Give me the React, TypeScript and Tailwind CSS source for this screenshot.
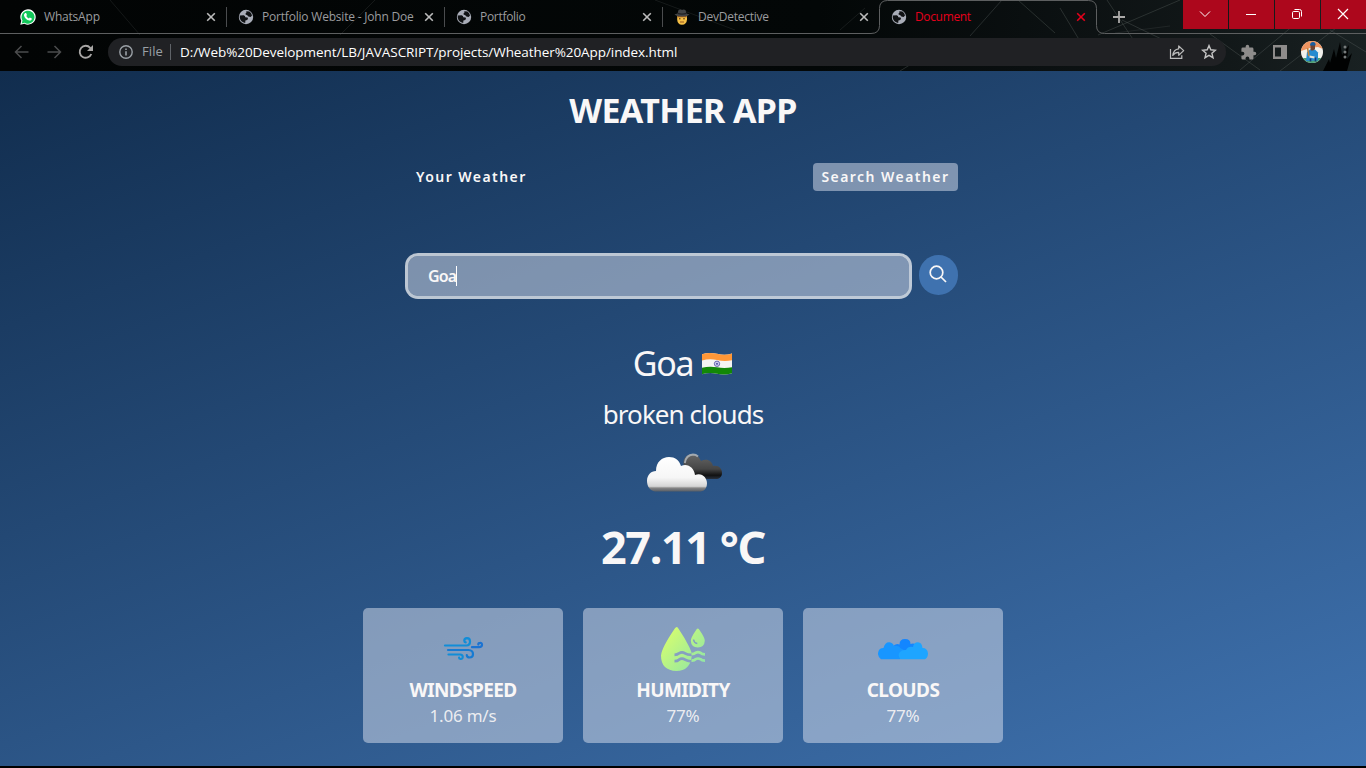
import React from "react";

type IconProps = { className?: string };

const Globe = ({ className = "" }: IconProps) => (
  <svg viewBox="0 0 16 16" className={`size-4 shrink-0 ${className}`}>
    <circle cx="8" cy="8" r="7.2" fill="#a9adb8" />
    <path
      d="M1.8 6.6 L5.6 6.3 Q7.4 6.6 7.3 8.2 L9.6 8.6 Q10.6 10 9.2 11 L7.4 11.6 L7.2 14 Q2.6 13.2 1.7 8.6Z M8.3 2.3 L11.4 2.6 Q13.6 4.1 14 6.6 L12.6 8 L10.4 7.5 Q9.6 6.2 7.6 5.6 Q7 4.4 8.4 3.8Z"
      fill="#101214"
    />
  </svg>
);

const WhatsApp = () => (
  <svg viewBox="0 0 16 16" className="size-4 shrink-0">
    <path d="M.3 15.8 1.3 11.8A7.7 7.7 0 1 1 4.4 14.8Z" fill="#fff" />
    <path d="M1.7 14.4 2.5 11.6A6.5 6.5 0 1 1 4.6 13.7Z" fill="#12c75a" />
    <path
      d="M5.2 4.1h.9l.9 2-.7 1c.6 1.2 1.4 1.9 2.6 2.4l.9-1 2 1v.8c-.4 1-1.4 1.5-2.3 1.3-2.9-.7-5-2.8-5.5-5.2-.1-.9.5-1.8 1.2-2.3Z"
      fill="#fff"
    />
  </svg>
);

const Detective = () => (
  <svg viewBox="0 0 16 16" className="size-4 shrink-0">
    <path d="M3.2 7h9.8v3.5Q12.6 15.6 8 15.8 3.4 15.6 3.2 10.5Z" fill="#f5bf45" />
    <path d="M3.4 6.5h9.2v1.8H3.4Z" fill="#9b5b1e" />
    <circle cx="5.8" cy="9.7" r=".8" fill="#54301a" />
    <circle cx="10" cy="9.7" r=".8" fill="#54301a" />
    <path d="M6 13h4" stroke="#8a4a1c" strokeWidth=".9" />
    <path d="M.4 5.4 3.6 4.6 4.4 1.2Q6.200-.2 8 .9 9.800-.2 11.600 1.200L12.400 4.600 15.600 5.400Q13 7.600 8 7.600T.4 5.400Z" fill="#424447" />
    <path d="M3.700 4.300Q8 5.800 12.300 4.300" stroke="#202124" strokeWidth="1.300" fill="none" />
  </svg>
);

const Cross = ({ className = "" }: IconProps) => (
  <svg viewBox="0 0 10 10" className={`size-[10px] shrink-0 ${className}`}>
    <path d="M1.200 1.200 8.800 8.800M8.800 1.200 1.200 8.800" stroke="currentColor" strokeWidth="1.600" />
  </svg>
);

function Tab({ title, icon, tracking }: { title: string; icon: React.ReactNode; tracking: string }) {
  return (
    <div className="flex h-[34px] w-[207px] shrink-0 items-center text-[#9b9c9f]">
      {icon}
      <span className={`ml-2 flex-1 whitespace-nowrap text-[12px] ${tracking}`}>{title}</span>
      <Cross className="mr-[10px] text-[#bcbcbc]" />
      <span className="h-5 w-px bg-[#4a4c4e]" />
    </div>
  );
}

function WindowButton({ children }: { children: React.ReactNode }) {
  return (
    <div className="flex h-[29px] flex-1 items-center justify-center bg-[#ad071c] text-white">
      <svg viewBox="0 0 12 12" className="mr-px mb-px size-3" fill="none" stroke="currentColor" strokeWidth="1">
        {children}
      </svg>
    </div>
  );
}

const Scratches = () => (
  <svg viewBox="0 0 1366 71" className="absolute inset-0 h-[71px] w-[1366px]" fill="none">
    <defs>
      <linearGradient id="steel">
        <stop offset="0" stopColor="#020404" />
        <stop offset=".6" stopColor="#030707" />
        <stop offset=".75" stopColor="#0a0f10" />
        <stop offset=".9" stopColor="#121819" />
        <stop offset="1" stopColor="#192122" />
      </linearGradient>
    </defs>
    <rect width="1366" height="71" fill="url(#steel)" />
    <g stroke="#59605f" strokeOpacity=".38">
      <path d="M1098 35 1180 0M1107 0 1150 65M1122 20 1180 48M1060 8 1095 66M1018 0 1055 33M1240 70 1300 20M1280 71 1340 25M1330 30 1366 52M1210 34 1260 70M970 36 1002 0M900 71 950 40" />
      <path d="M655 0 735 30M840 30 865 8M340 35 375 0M110 0 140 35M1115 33 1170 26" strokeOpacity=".22" />
    </g>
    <path d="m1323 71 6-12 1 4 4-14 2 9 4-16 2 13 7-10-2 14 5-6-5 18Z" fill="#010202" />
  </svg>
);

function TabStrip() {
  return (
    <div className="relative flex h-[34px]">
      <svg viewBox="0 0 1366 35" className="absolute left-0 top-0 h-[35px] w-[1366px]" fill="none">
        <path
          d="M0 33.500H871Q879.500 33.500 879.500 25.500V8.500Q879.500.5 887.500.5H1088.500Q1096.500.5 1096.500 8.500V25.500Q1096.500 33.500 1104.500 33.500H1366"
          stroke="#5d5f60"
        />
      </svg>
      <div className="relative flex pl-5">
        <Tab title="WhatsApp" icon={<WhatsApp />} tracking="tracking-[-0.2px]" />
        <div className="w-[11px]" />
        <Tab title="Portfolio Website - John Doe" icon={<Globe />} tracking="tracking-[-0.2px]" />
        <div className="w-[11px]" />
        <Tab title="Portfolio" icon={<Globe />} tracking="tracking-[-0.3px]" />
        <div className="w-[11px]" />
        <div className="flex h-[34px] w-[217px] items-center text-[#9b9c9f]">
          <Detective />
          <span className="ml-2 w-[161px] text-[12px] tracking-[-0.25px]">DevDetective</span>
          <Cross className="text-[#bcbcbc]" />
        </div>
        <div className="flex h-[34px] w-[222px] items-center text-[#e5001b]">
          <Globe />
          <span className="ml-2 w-[161px] text-[12px] tracking-[-0.35px]">Document</span>
          <Cross />
        </div>
      </div>
      <svg viewBox="0 0 12 12" className="relative mt-[11px] size-3" stroke="#aaa9a8" strokeWidth="1.800">
        <path d="M6 0v12M0 6h12" />
      </svg>
      <div className="relative ml-auto flex w-[183px] gap-px">
        <WindowButton>
          <path d="m1 3.500 5 5 5-5" />
        </WindowButton>
        <WindowButton>
          <path d="M1 6.500h10" />
        </WindowButton>
        <WindowButton>
          <rect x="1.500" y="3.500" width="7" height="7" rx="1.200" />
          <path d="M3.500 1.500h5Q10.500 1.500 10.500 3.500v5" />
        </WindowButton>
        <WindowButton>
          <path d="m1 1 10 10M11 1 1 11" strokeWidth="1.200" />
        </WindowButton>
      </div>
    </div>
  );
}

const Avatar = () => (
  <svg viewBox="0 0 22 22" className="size-[22px]">
    <defs>
      <clipPath id="avatar">
        <circle cx="11" cy="11" r="11" />
      </clipPath>
    </defs>
    <g clipPath="url(#avatar)">
      <path d="M0 0h22v22H0Z" fill="#f1f0ec" />
      <path d="M0 3q4-3 9-3h5q5 1 8 8l-5-2-8 1-9 3Z" fill="#ee9460" />
      <path d="M0 17h22v5H0Z" fill="#4b9f77" />
      <path d="m5 20 1-9 3-2.500h5l3 3 0 8Z" fill="#268bd0" />
      <path d="M9.500 4q2-3 4.500 0v4q-2 2.500-4.500 1Z" fill="#704331" />
      <path d="M9 4.500q0-3.500 3-3.500t2.500 3.500Z" fill="#195da0" />
      <path d="m6.500 7 1.500 8" stroke="#c4833b" strokeWidth="1.600" />
      <path d="m8.500 15.500 5 1" stroke="#e8e4d7" strokeWidth="1.800" />
      <path d="M9.500 17.500v3m5-4v4" stroke="#183b76" strokeWidth="1.600" />
    </g>
  </svg>
);

function Toolbar() {
  return (
    <div className="relative flex h-[36px] items-center pl-[14px]">
      <svg viewBox="0 0 16 16" className="size-4" fill="none" stroke="#4b4c4d" strokeWidth="1.500">
        <path d="M14.500 8H1.500M7.500 2 1.500 8l6 6" />
      </svg>
      <svg viewBox="0 0 16 16" className="ml-4 size-4" fill="none" stroke="#4b4c4d" strokeWidth="1.500">
        <path d="M1.500 8h13M8.500 2l6 6-6 6" />
      </svg>
      <svg viewBox="0 0 16 16" className="ml-4 size-4" fill="none" stroke="#a8a6a5" strokeWidth="1.900">
        <path d="M13.300 10A6 6 0 1 1 12.200 3.800L14 5.600" />
        <path d="M15 1v6H9Z" fill="#a8a6a5" stroke="none" />
      </svg>
      <div className="ml-[14px] flex h-7 w-[1118px] items-center rounded-full bg-[#202124] pl-[11px] pr-[9px]">
        <svg viewBox="0 0 14 14" className="size-[14px]" fill="none" stroke="#9aa0a6" strokeWidth="1.400">
          <circle cx="7" cy="7" r="6.200" />
          <path d="M7 6.200v4.300M7 3.500v1.500" strokeWidth="1.600" />
        </svg>
        <span className="ml-[9px] w-[28px] text-[13px] tracking-[0.100px] text-[#9aa0a6]">File</span>
        <span className="h-4 w-px bg-[#5f6368]" />
        <span className="ml-[9px] whitespace-nowrap text-[13.500px] tracking-[-0.070px] text-white">
          D:/Web%20Development/LB/JAVASCRIPT/projects/Wheather%20App/index.html
        </span>
        <svg viewBox="0 0 16 16" className="ml-auto size-4" fill="none" stroke="#bcbcbc" strokeWidth="1.200">
          <path d="M1.500 5v9.400h11.300v-3.200" />
          <path d="M9.700 2v2.800Q4.500 5.300 3.800 11.500 6 8.300 9.700 8.400v2.900l5-4.700Z" strokeLinejoin="round" />
        </svg>
        <svg viewBox="0 0 16 16" className="ml-4 size-4" fill="none" stroke="#c3c3c3" strokeWidth="1.400">
          <path d="m8 1.600 1.800 4.200 4.600.4-3.500 3 1.100 4.500L8 11.300l-4 2.400 1.100-4.500-3.500-3 4.600-.4Z" />
        </svg>
      </div>
      <svg viewBox="0 0 24 24" className="ml-[14px] size-[17px]" fill="#8e8c8b">
        <path d="M20.500 11H19V7a2 2 0 0 0-2-2h-4V3.500a2.500 2.500 0 0 0-5 0V5H4a2 2 0 0 0-2 2v3.800h1.500a2.700 2.700 0 0 1 0 5.400H2V20a2 2 0 0 0 2 2h3.800v-1.500a2.700 2.700 0 0 1 5.400 0V22H17a2 2 0 0 0 2-2v-4h1.500a2.500 2.500 0 0 0 0-5Z" />
      </svg>
      <svg viewBox="0 0 14 14" className="ml-4 size-[14px]">
        <path d="M0 0h14v14H0ZM2 2.500v9h6v-9Z" fill="#8e8c8b" fillRule="evenodd" />
      </svg>
      <div className="ml-[14px]">
        <Avatar />
      </div>
      <svg viewBox="0 0 4 14" className="ml-5 h-[14px] w-1" fill="#777b7b">
        <circle cx="2" cy="2" r="1.500" />
        <circle cx="2" cy="7" r="1.500" />
        <circle cx="2" cy="12" r="1.500" />
      </svg>
    </div>
  );
}

const IndiaFlag = () => (
  <svg viewBox="0 0 32 24" className="mt-[2px] h-6 w-8">
    <defs>
      <clipPath id="flag">
        <path d="M1 2.200Q8-.2 16 1.800T31 1.500V21.200Q24 23.500 16 21.700T1 22.200Z" />
      </clipPath>
    </defs>
    <g clipPath="url(#flag)">
      <path d="M0 0h32v24H0Z" fill="#f4f4f2" />
      <path d="M0 0h32v8Q24 10 16 8T0 8.700Z" fill="#ff9737" />
      <path d="M0 16Q8 13.700 16 15.300T32 15v9H0Z" fill="#128807" />
      <circle cx="16" cy="11.800" r="2.700" fill="#cccbed" stroke="#5554a4" strokeWidth=".8" />
      <circle cx="16" cy="11.800" r=".9" fill="#34348e" />
    </g>
  </svg>
);

const BrokenClouds = () => (
  <svg viewBox="0 0 78 42" className="ml-[2px] h-[42px] w-[78px]">
    <defs>
      <linearGradient id="lightCloud" x1="0" y1="0" x2="0" y2="1">
        <stop offset="0" stopColor="#fff" />
        <stop offset=".6" stopColor="#f6f6f6" />
        <stop offset=".85" stopColor="#d5d5d5" />
        <stop offset=".9" stopColor="#858585" />
        <stop offset="1" stopColor="#575d65" />
      </linearGradient>
      <linearGradient id="darkCloud" x1="0" y1="0" x2="0" y2="1">
        <stop offset="0" stopColor="#666" />
        <stop offset=".6" stopColor="#454545" />
        <stop offset=".85" stopColor="#111" />
        <stop offset="1" stopColor="#27303d" />
      </linearGradient>
    </defs>
    <path d="M39 16C37 9 41 4 48 4 52 4 54 7 56 11 62 8 67 11 68 16 74 15 77 19 77 23 77 27 74 29 71 29H51Z" fill="url(#darkCloud)" />
    <path d="M39.800 13Q41 5 48 4.500 51 4.500 53 6.500" fill="none" stroke="#b5bbc2" strokeOpacity=".8" strokeWidth="1.800" />
    <path d="M10 41.500C5 41 2 36 2 31 2 25 6 21 11 21 11 12 17 7 24 7 30 7 34 10 36 16 43 13 49 18 50 25 57 22 62 28 62 33 62 39 59 41.500 54 41.500Z" fill="url(#lightCloud)" />
  </svg>
);

const Wind = () => (
  <svg viewBox="0 0 50 50" className="size-[50px]" fill="none" strokeWidth="2.200" strokeLinecap="round">
    <path d="M7 21.500h21.500q3.500-.2 3.500-4 0-3.300-3-3.300-2.700.1-2.700 2.500 0 1.500 1.400 1.600" stroke="#118dd8" />
    <path d="M10 26h20.500q4.500.2 4.500 4.200-.1 3.300-3.400 3.300-2.600-.1-2.800-2.400" stroke="#167bd3" />
    <path d="M10.500 30.500H22q3 .2 2.700 2.700-.3 2-2.200 1.800-1.500-.2-1.400-1.400" stroke="#118dd8" />
    <path d="M34 23.200h7q3-.1 3-2.400 0-2-2-1.900-1.700 0-1.700 1.700" stroke="#1b73d2" />
  </svg>
);

const Humidity = () => (
  <svg viewBox="0 0 50 50" className="size-[50px]">
    <defs>
      <linearGradient id="drops" x1="5" y1="5" x2="46" y2="40" gradientUnits="userSpaceOnUse">
        <stop stopColor="#dbff6a" />
        <stop offset="1" stopColor="#91e6a5" />
      </linearGradient>
      <mask id="ripples" maskUnits="userSpaceOnUse" x="0" y="0" width="50" height="50">
        <path d="M0 0h50v50H0Z" fill="white" />
        <path d="M16.500 30.800q3 0 4.500-1.500 3-2 6 0t8 1.500M16.500 37.200q3 0 4.500-1.500 3-2 6 0t8 1.500" fill="none" stroke="black" strokeWidth="2.700" />
      </mask>
    </defs>
    <path d="M18.700 3q1 0 2 2 6.500 9.500 10.600 18 2.700 5 2.500 9Q32 47 18.500 47 3 46.500 3 31.500 3.500 24 16.800 4.500q1-1.500 1.900-1.500Z" fill="url(#drops)" mask="url(#ripples)" />
    <path d="M39.800 4.500q1 0 2 2 5 7.200 5 10.300-.3 6.500-7 6.700-6.700-.2-7-6.700 0-3 5-10.300 1-2 2-2Z" fill="url(#drops)" />
    <path d="M35.500 15.500q.5 3.500 3.800 4" fill="none" stroke="#849fc0" strokeWidth="1.500" />
    <path d="M33.500 30.200q3 0 4.200-1.500 2.300-1.200 4.600 0 1.700 1.600 4.700 1.600M33.500 36.600q3 0 4.200-1.500 2.300-1.200 4.600 0 1.700 1.600 4.700 1.600" fill="none" stroke="url(#drops)" strokeWidth="2.700" />
  </svg>
);

const Clouds = () => (
  <svg viewBox="0 0 50 50" className="size-[50px]">
    <path d="M13 31Q14 18 21.500 20.500 21.500 15 27 15T32.500 20q5-1.800 8 4L33 34Z" fill="#1386ff" />
    <path d="M3 35.300Q-1 32 .3 28 1 24 5.500 24 7 18 11.500 18.300q3.500.5 4.500 3.700 5-1 7 2.500L30 28 22 35.300Z" fill="#1896ff" />
    <path d="M22.500 35.300Q19 31 22 28q2-2.500 6-2 2-4 7-3 .5-4.800 5-4.800 4 .3 4.500 5.800 5 0 5.500 5.500 0 4-3 5.800Z" fill="#1ea5ff" />
  </svg>
);

function Metric({ icon, name, value }: { icon: React.ReactNode; name: string; value: string }) {
  return (
    <div className="flex h-[135px] w-[200px] flex-col items-center rounded-[5px] bg-[#dbe2ef]/50 pt-4">
      {icon}
      <h3 className="mt-1 text-[19px] font-bold leading-6 tracking-[-0.600px] text-[#f9f7f7]">{name}</h3>
      <p className="mt-[2px] text-[17px] leading-6 tracking-[-0.200px] text-[#f9f7f7]/90">{value}</p>
    </div>
  );
}

export default function App() {
  return (
    <div className="flex h-[768px] w-[1366px] flex-col overflow-hidden bg-black">
      <header className="relative h-[71px] shrink-0 border-b border-[#303334] font-['Open_Sans',sans-serif]">
        <Scratches />
        <TabStrip />
        <Toolbar />
      </header>
      <main className="flex h-[695px] flex-col items-center bg-[linear-gradient(160deg,#112d4e_0%,#3f72af_100%)] font-['Noto_Sans',sans-serif] text-[#f9f7f7]">
        <h1 className="mt-[17px] text-[34px] font-bold leading-[44px] tracking-[-0.650px]">WEATHER APP</h1>
        <nav className="mt-[31px] flex h-7 w-[550px] items-center justify-between text-[14px] font-semibold leading-7 tracking-[1.450px]">
          <button className="h-7 px-2">Your Weather</button>
          <button className="h-7 w-[145px] whitespace-nowrap rounded bg-[#dbe2ef]/50">Search Weather</button>
        </nav>
        <form className="ml-[405px] mt-[62px] flex h-[46px] w-[553px] items-start gap-[7px] self-start">
          <div className="flex h-[46px] w-[507px] items-center rounded-[13px] border-[3px] border-white/70 bg-[#dbe2ef]/50 bg-clip-padding pl-5 text-[16px] font-semibold tracking-[-0.900px]">
            <span>Goa</span>
            <span className="h-5 w-px bg-white" />
          </div>
          <button type="button" className="mt-[2px] flex h-10 w-[39px] items-center justify-center rounded-full bg-[#3f72af] pb-[2px] pr-[2px]">
            <svg viewBox="0 0 18 18" className="size-[18px]" fill="none" stroke="#f9f7f7" strokeWidth="1.700">
              <circle cx="7.500" cy="7.500" r="6.300" />
              <path d="m12 12 5 5" />
            </svg>
          </button>
        </form>
        <div className="mt-[41px] flex h-[46px] items-center gap-2">
          <p className="text-[34px] leading-[46px] tracking-[-1.300px]">Goa</p>
          <IndiaFlag />
        </div>
        <p className="mt-[10px] text-[26px] leading-[36px] tracking-[-0.950px]">broken clouds</p>
        <div className="mt-[18px] h-[42px]">
          <BrokenClouds />
        </div>
        <p className="mt-[25px] text-[45px] font-bold leading-[60px] tracking-[-1.400px]">27.11 °C</p>
        <section className="mt-[31px] flex gap-5">
          <Metric icon={<Wind />} name="WINDSPEED" value="1.06 m/s" />
          <Metric icon={<Humidity />} name="HUMIDITY" value="77%" />
          <Metric icon={<Clouds />} name="CLOUDS" value="77%" />
        </section>
      </main>
    </div>
  );
}
